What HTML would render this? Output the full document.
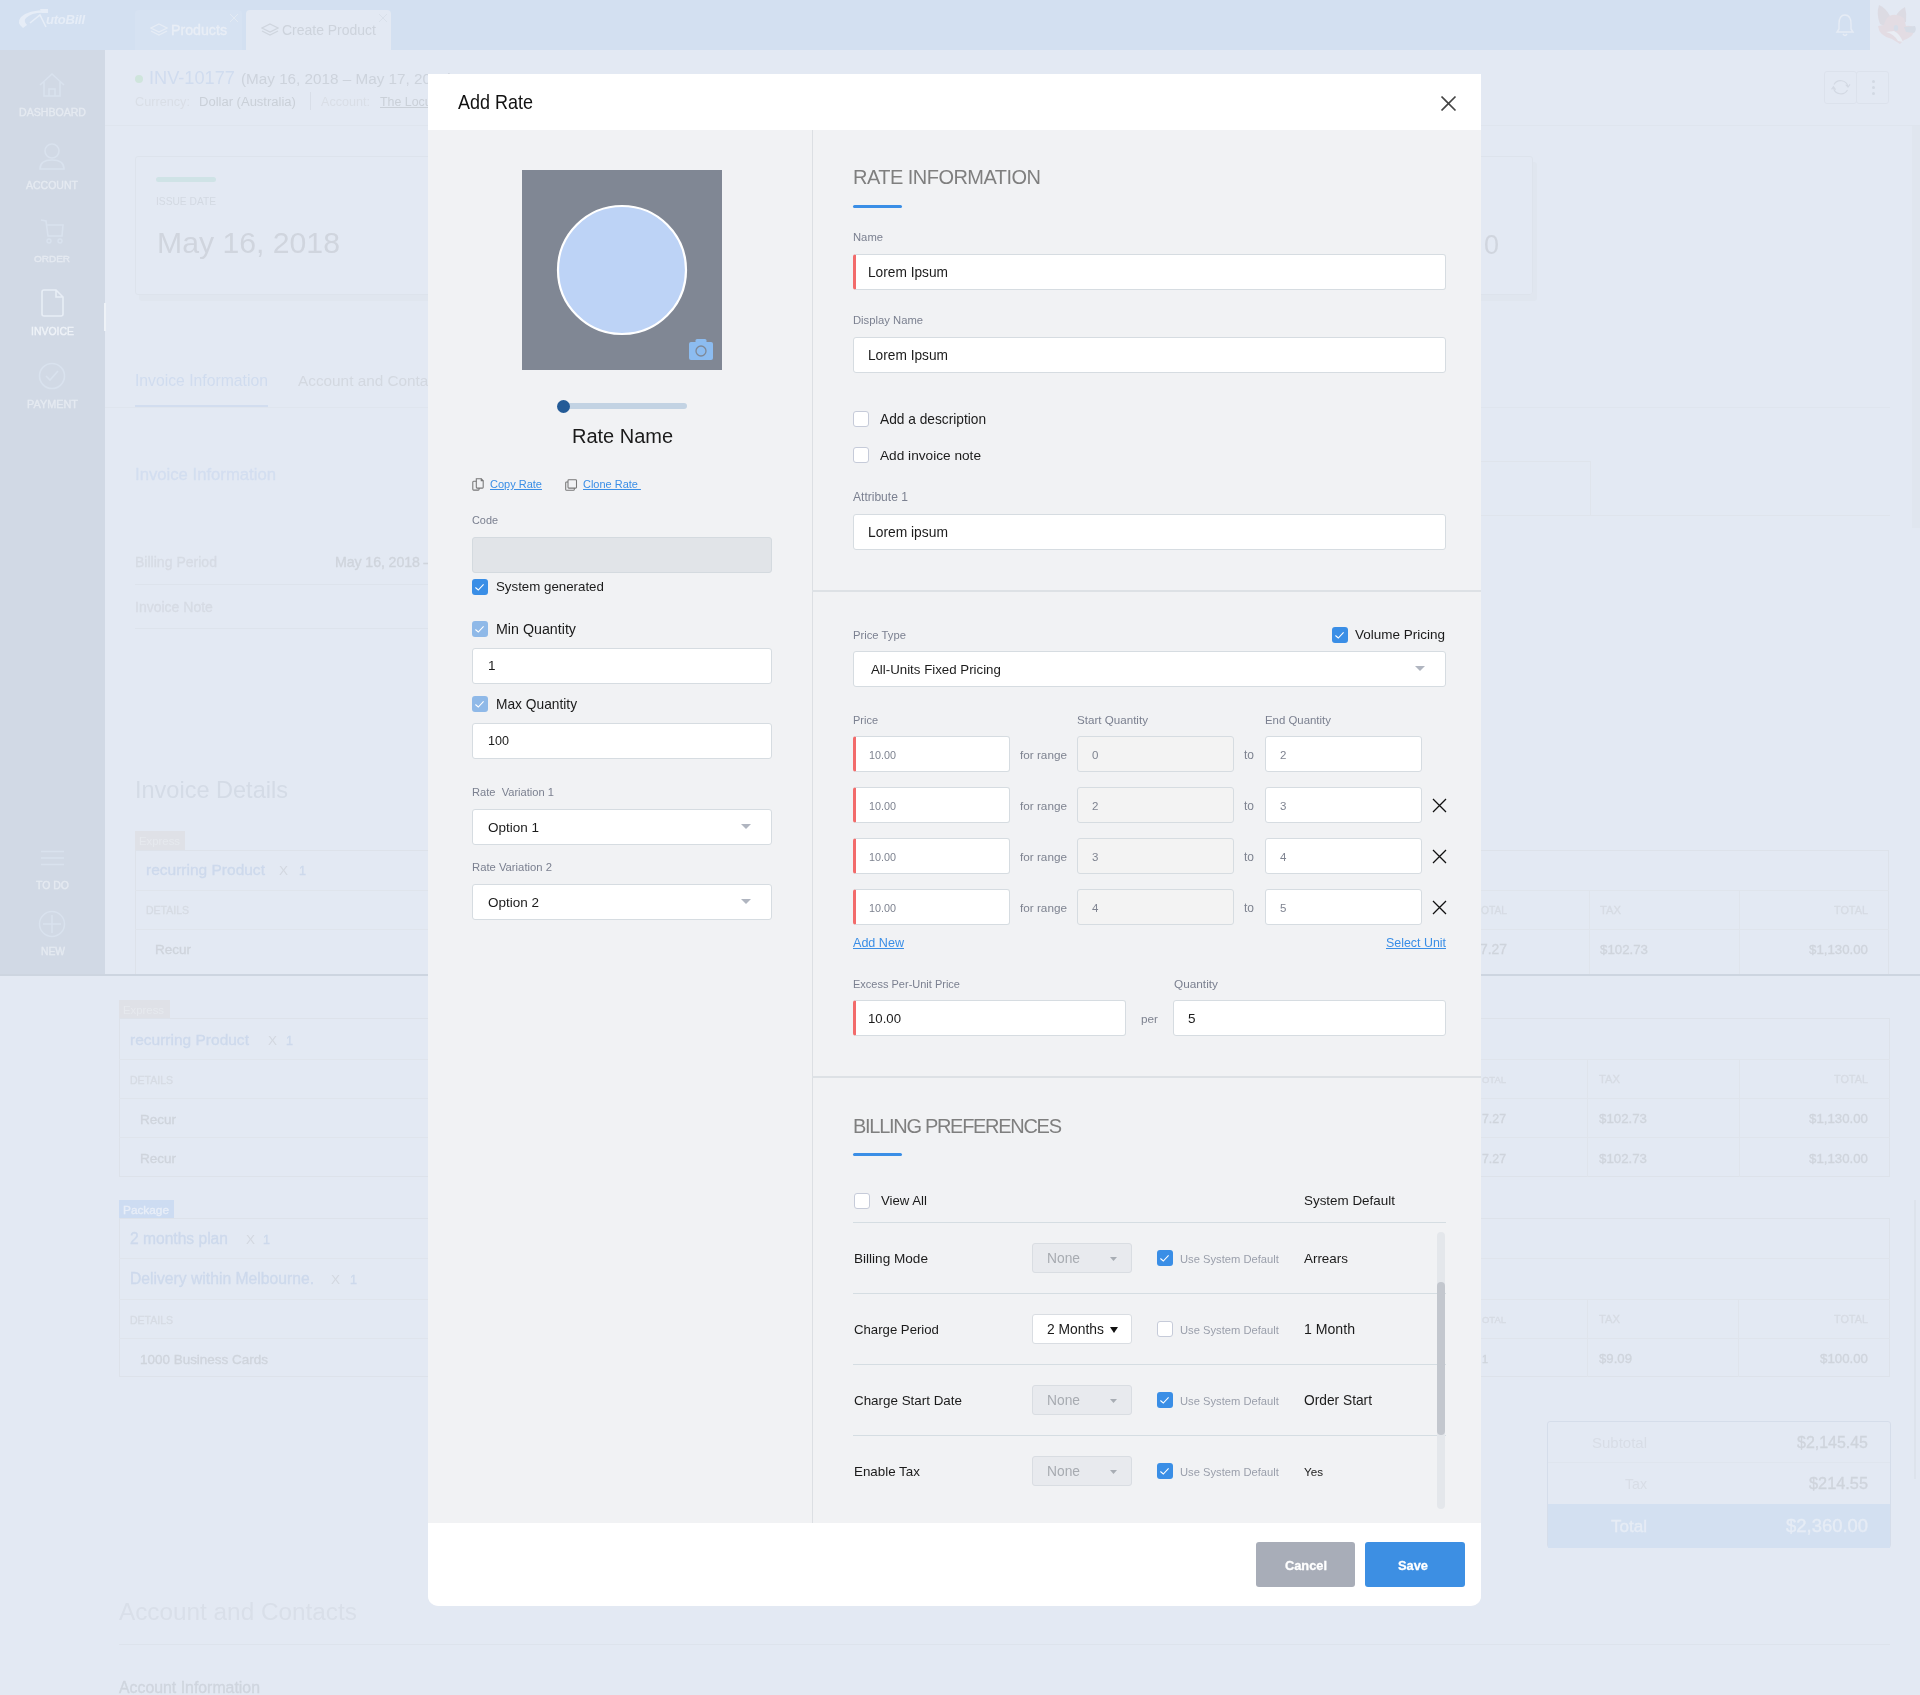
<!DOCTYPE html>
<html><head><meta charset="utf-8">
<style>
*{box-sizing:border-box;margin:0;padding:0}
html,body{width:1920px;height:1695px;overflow:hidden}
body{position:relative;background:#e3e9f3;font-family:"Liberation Sans",sans-serif;color:#111}
.a{position:absolute;white-space:nowrap}
</style></head><body>
<div style="position:absolute;left:0;top:0;width:1920px;height:1695px;will-change:transform">
<div class="a" style="left:0px;top:0px;width:1870px;height:50px;background:#d3e0f1;"></div>
<div class="a" style="left:1870px;top:0px;width:50px;height:50px;background:#e3e9f3;"></div>
<div class="a" style="left:46px;top:13px;font-size:13px;line-height:13px;color:#e6edf7;font-weight:bold;letter-spacing:-0.239px;font-style:italic;">utoBill</div>
<svg class="a" style="left:10px;top:0px;" width="40" height="32" viewBox="0 0 40 32"><path d="M13 28 Q6 23 11 17 Q18 10 37 10 L37 13 Q22 12 16 18 Q13 21 17 25Z" fill="#e6edf7"/><path d="M30 9 L38 9 L38 13 L32 13Z" fill="#e6edf7"/><path d="M20 23 L30 15 L36 27" stroke="#e6edf7" stroke-width="1.6" fill="none" stroke-linejoin="miter"/></svg>
<div class="a" style="left:135px;top:10px;width:107px;height:40px;background:#d6e2f2;border-radius:4px 4px 0 0;"></div>
<div class="a" style="left:246px;top:10px;width:145px;height:40px;background:#e3e9f3;border-radius:4px 4px 0 0;"></div>
<div class="a" style="left:171px;top:23px;font-size:14.19px;line-height:14.19px;color:#e9eef6;letter-spacing:0.001px;-webkit-text-stroke:0.35px #e9eef6;">Products</div>
<div class="a" style="left:282px;top:24px;font-size:13.97px;line-height:13.97px;color:#cdd3dc;">Create Product</div>
<svg class="a" style="left:150px;top:23px;" width="18" height="14" viewBox="0 0 18 14"><path d="M9 1 L17 5 L9 9 L1 5Z M1 8 L9 12 L17 8" stroke="#e6ecf5" stroke-width="1.3" fill="none"/></svg>
<svg class="a" style="left:261px;top:23px;" width="18" height="14" viewBox="0 0 18 14"><path d="M9 1 L17 5 L9 9 L1 5Z M1 8 L9 12 L17 8" stroke="#cfd5de" stroke-width="1.3" fill="none"/></svg>
<svg class="a" style="left:229px;top:13px;" width="10" height="10" viewBox="0 0 10 10"><path d="M1 1L9 9M9 1L1 9" stroke="#e3eaf3" stroke-width="1"/></svg>
<svg class="a" style="left:378px;top:13px;" width="10" height="10" viewBox="0 0 10 10"><path d="M1 1L9 9M9 1L1 9" stroke="#d9e0ea" stroke-width="1"/></svg>
<svg class="a" style="left:1835px;top:13px;" width="20" height="24" viewBox="0 0 20 24"><path d="M10 2 C5 2 4 7 4 11 L4 16 L2 19 L18 19 L16 16 L16 11 C16 7 15 2 10 2Z M8 21 Q10 24 12 21" stroke="#e6ecf5" stroke-width="1.4" fill="none"/></svg>
<svg class="a" style="left:1870px;top:0px;" width="50" height="50" viewBox="0 0 50 50"><path d="M9 5 Q6 14 10 24 L14 26 L20 16 Q16 8 9 5Z" fill="#dcdbe3"/><path d="M35 7 Q28 11 26 16 L31 24 L36 22 Q37 14 35 7Z" fill="#dcdbe3"/><path d="M8 26 Q9 36 22 39 L30 44 L34 40 Q40 38 43 34 L45 28 Q40 25 36 26 L34 18 Q28 14 22 15 Q16 16 14 25Z" fill="#e3dce3"/><path d="M34 27 L45 26 Q47 30 44 33 L36 32Z" fill="#d6dce6"/><path d="M16 32 Q24 34 28 41 L33 42 Q30 34 24 31Z" fill="#e9edf4"/><ellipse cx="26" cy="28" rx="2.2" ry="3" fill="#d5dde9"/></svg>
<div class="a" style="left:0px;top:50px;width:105px;height:925px;background:#d1d9e5;"></div>
<div class="a" style="left:19px;top:107px;font-size:10.58px;line-height:10.58px;color:#e5eaf1;letter-spacing:-0.002px;-webkit-text-stroke:0.35px #e5eaf1;">DASHBOARD</div>
<svg class="a" style="left:38px;top:72px;" width="28" height="26" viewBox="0 0 28 26"><path d="M2 13 L14 2 L26 13 M6 10 L6 24 L22 24 L22 10 M11 24 L11 17 L17 17 L17 24" stroke="#d9e2ee" stroke-width="1.6" fill="none"/></svg>
<div class="a" style="left:26px;top:180px;font-size:10.52px;line-height:10.52px;color:#e5eaf1;letter-spacing:-0.002px;-webkit-text-stroke:0.35px #e5eaf1;">ACCOUNT</div>
<svg class="a" style="left:38px;top:142px;" width="28" height="30" viewBox="0 0 28 30"><circle cx="14" cy="9" r="7" stroke="#d9e2ee" stroke-width="1.6" fill="none"/><path d="M2 27 Q2 18 14 18 Q26 18 26 27Z" stroke="#d9e2ee" stroke-width="1.6" fill="none"/></svg>
<div class="a" style="left:34px;top:254px;font-size:9.97px;line-height:9.97px;color:#e5eaf1;letter-spacing:0.000px;-webkit-text-stroke:0.35px #e5eaf1;">ORDER</div>
<svg class="a" style="left:38px;top:217px;" width="28" height="28" viewBox="0 0 28 28"><path d="M3 3 L8 4 L10 19 L24 19 L25 8 L9 8" stroke="#d9e2ee" stroke-width="1.6" fill="none"/><circle cx="11" cy="24" r="2" stroke="#d9e2ee" stroke-width="1.4" fill="none"/><circle cx="22" cy="24" r="2" stroke="#d9e2ee" stroke-width="1.4" fill="none"/></svg>
<div class="a" style="left:31px;top:327px;font-size:10.46px;line-height:10.46px;color:#eff3f8;letter-spacing:-0.001px;-webkit-text-stroke:0.35px #eff3f8;">INVOICE</div>
<svg class="a" style="left:40px;top:289px;" width="26" height="29" viewBox="0 0 26 29"><path d="M2 3 Q2 1 4 1 L16 1 L23 8 L23 25 Q23 27 21 27 L4 27 Q2 27 2 25Z M16 1 L16 8 L23 8" stroke="#e8eef6" stroke-width="1.6" fill="none"/></svg>
<div class="a" style="left:27px;top:399px;font-size:10.88px;line-height:10.88px;color:#e5eaf1;letter-spacing:0.004px;-webkit-text-stroke:0.35px #e5eaf1;">PAYMENT</div>
<svg class="a" style="left:38px;top:362px;" width="28" height="28" viewBox="0 0 28 28"><circle cx="14" cy="14" r="12.5" stroke="#d9e2ee" stroke-width="1.6" fill="none"/><path d="M8 14 L12 18 L20 9" stroke="#d9e2ee" stroke-width="1.6" fill="none"/></svg>
<div class="a" style="left:36px;top:881px;font-size:10.48px;line-height:10.48px;color:#e5eaf1;letter-spacing:0.001px;-webkit-text-stroke:0.35px #e5eaf1;">TO DO</div>
<svg class="a" style="left:40px;top:849px;" width="25" height="20" viewBox="0 0 25 20"><path d="M1 2.5 H24 M1 9 H24 M1 15.5 H24" stroke="#d9e2ee" stroke-width="1.6"/></svg>
<div class="a" style="left:41px;top:947px;font-size:10.29px;line-height:10.29px;color:#e5eaf1;letter-spacing:-0.002px;-webkit-text-stroke:0.35px #e5eaf1;">NEW</div>
<svg class="a" style="left:38px;top:910px;" width="28" height="28" viewBox="0 0 28 28"><circle cx="14" cy="14" r="12.5" stroke="#d9e2ee" stroke-width="1.5" fill="none"/><path d="M14 5 V23 M5 14 H23" stroke="#d9e2ee" stroke-width="1.5"/></svg>
<div class="a" style="left:104px;top:303px;width:2px;height:28px;background:#eef2f7;"></div>
<div class="a" style="left:135px;top:75px;width:8px;height:8px;background:#cfe5dc;border-radius:4px;"></div>
<div class="a" style="left:149px;top:69px;font-size:18.2px;line-height:18.2px;color:#d0dcef;">INV-10177</div>
<div class="a" style="left:241px;top:71px;font-size:15.25px;line-height:15.25px;color:#cdd3dc;">(May 16, 2018 – May 17, 2018)</div>
<div class="a" style="left:135px;top:96px;font-size:12.69px;line-height:12.69px;color:#d9dee6;">Currency:</div>
<div class="a" style="left:199px;top:95px;font-size:13.03px;line-height:13.03px;color:#cad0d8;">Dollar (Australia)</div>
<div class="a" style="left:310px;top:92px;width:1px;height:18px;background:#d8dee8;"></div>
<div class="a" style="left:321px;top:96px;font-size:12.59px;line-height:12.59px;color:#d9dee6;">Account:</div>
<div class="a" style="left:380px;top:96px;font-size:12.4px;line-height:12.4px;color:#cad0d8;text-decoration:underline;">The Locust Walk</div>
<div class="a" style="left:105px;top:125px;width:1815px;height:1px;background:#dfe5ee;"></div>
<div class="a" style="left:1824px;top:71px;width:33px;height:33px;background:none;border:1px solid #dce2ec;border-radius:3px;"></div>
<div class="a" style="left:1856px;top:71px;width:33px;height:33px;background:none;border:1px solid #dce2ec;border-radius:3px;"></div>
<svg class="a" style="left:1830px;top:77px;" width="22" height="20" viewBox="0 0 22 20"><path d="M4 7.5 A7.6 7.6 0 0 1 18 9.5 M17.5 13 A7.6 7.6 0 0 1 3.5 11" stroke="#d3d9e3" stroke-width="1.1" fill="none"/><path d="M15.8 7.6 L18 10.2 L20 7.4 M1.6 12.4 L3.4 9.8 L5.6 12.6" stroke="#d3d9e3" stroke-width="1.1" fill="none"/></svg>
<div class="a" style="left:1872px;top:80px;width:3px;height:3px;background:#d2d9e3;border-radius:2px;"></div>
<div class="a" style="left:1872px;top:86px;width:3px;height:3px;background:#d2d9e3;border-radius:2px;"></div>
<div class="a" style="left:1872px;top:92px;width:3px;height:3px;background:#d2d9e3;border-radius:2px;"></div>
<div class="a" style="left:135px;top:156px;width:1398px;height:139px;background:none;border:1px solid #dde3ec;border-radius:3px;box-shadow:4px 6px 0 #e0e6ef;"></div>
<div class="a" style="left:156px;top:177px;width:60px;height:5px;background:#cfe3e6;border-radius:3px;"></div>
<div class="a" style="left:156px;top:197px;font-size:10.22px;line-height:10.22px;color:#d3d9e2;">ISSUE DATE</div>
<div class="a" style="left:157px;top:228px;font-size:30.19px;line-height:30.19px;color:#d0d5de;">May 16, 2018</div>
<div class="a" style="left:1484px;top:232px;font-size:26.97px;line-height:26.97px;color:#d0d5de;">0</div>
<div class="a" style="left:135px;top:373px;font-size:15.74px;line-height:15.74px;color:#d0dcef;">Invoice Information</div>
<div class="a" style="left:298px;top:373px;font-size:15.33px;line-height:15.33px;color:#d3d8e0;">Account and Contacts</div>
<div class="a" style="left:135px;top:405px;width:133px;height:3px;background:#d2ddef;"></div>
<div class="a" style="left:105px;top:407px;width:1785px;height:1px;background:#dfe5ee;"></div>
<div class="a" style="left:135px;top:467px;font-size:16.69px;line-height:16.69px;color:#d3def0;letter-spacing:-0.000px;-webkit-text-stroke:0.35px #d3def0;">Invoice Information</div>
<div class="a" style="left:135px;top:555px;font-size:14.05px;line-height:14.05px;color:#d6dbe4;letter-spacing:-0.000px;-webkit-text-stroke:0.35px #d6dbe4;">Billing Period</div>
<div class="a" style="left:335px;top:555px;font-size:14.2px;line-height:14.2px;color:#cfd4dc;letter-spacing:-0.100px;-webkit-text-stroke:0.35px #cfd4dc;">May 16, 2018 – May 17, 2018</div>
<div class="a" style="left:135px;top:584px;width:700px;height:1px;background:#dde3ec;"></div>
<div class="a" style="left:135px;top:600px;font-size:14.03px;line-height:14.03px;color:#d6dbe4;letter-spacing:0.001px;-webkit-text-stroke:0.35px #d6dbe4;">Invoice Note</div>
<div class="a" style="left:135px;top:628px;width:700px;height:1px;background:#dde3ec;"></div>
<div class="a" style="left:1400px;top:461px;width:190px;height:1px;background:#dfe4ec;"></div>
<div class="a" style="left:1590px;top:461px;width:1px;height:54px;background:#dfe4ec;"></div>
<div class="a" style="left:1400px;top:515px;width:490px;height:1px;background:#dfe4ec;"></div>
<div class="a" style="left:1912px;top:126px;width:8px;height:402px;background:#e0e6ef;"></div>
<div class="a" style="left:135px;top:779px;font-size:23.53px;line-height:23.53px;color:#d4dbe6;">Invoice Details</div>
<div class="a" style="left:135px;top:831px;width:50px;height:20px;background:#dfe1e7;"></div>
<div class="a" style="left:139px;top:836px;font-size:11.35px;line-height:11.35px;color:#e6e9ee;">Express</div>
<div class="a" style="left:135px;top:850px;width:1754px;height:125px;background:none;border:1px solid #dde2ea;"></div>
<div class="a" style="left:146px;top:862px;font-size:15.51px;line-height:15.51px;color:#cdd9ec;letter-spacing:0.003px;-webkit-text-stroke:0.35px #cdd9ec;">recurring Product</div>
<div class="a" style="left:279px;top:864px;font-size:13.49px;line-height:13.49px;color:#d3d8e0;">X</div>
<div class="a" style="left:299px;top:865px;font-size:12.58px;line-height:12.58px;color:#cdd9ec;letter-spacing:0.003px;-webkit-text-stroke:0.35px #cdd9ec;">1</div>
<div class="a" style="left:135px;top:890px;width:1754px;height:1px;background:#dfe4ec;"></div>
<div class="a" style="left:146px;top:905px;font-size:10.5px;line-height:10.5px;color:#d6dbe3;letter-spacing:0.003px;-webkit-text-stroke:0.35px #d6dbe3;">DETAILS</div>
<div class="a" style="left:135px;top:929px;width:1754px;height:1px;background:#dfe4ec;"></div>
<div class="a" style="left:155px;top:943px;font-size:13.5px;line-height:13.5px;color:#cfd4dc;letter-spacing:-0.003px;-webkit-text-stroke:0.35px #cfd4dc;">Recur</div>
<div class="a" style="left:1589px;top:890px;width:1px;height:85px;background:#dfe4ec;"></div>
<div class="a" style="left:1739px;top:890px;width:1px;height:85px;background:#dfe4ec;"></div>
<div class="a" style="left:1481px;top:906px;font-size:10.24px;line-height:10.24px;color:#d6dbe3;letter-spacing:0.006px;-webkit-text-stroke:0.35px #d6dbe3;">OTAL</div>
<div class="a" style="left:1600px;top:905px;font-size:11.22px;line-height:11.22px;color:#d6dbe3;letter-spacing:0.007px;-webkit-text-stroke:0.35px #d6dbe3;">TAX</div>
<div class="a" style="right:52px;top:905px;font-size:10.86px;line-height:10.86px;color:#d6dbe3;letter-spacing:0.002px;-webkit-text-stroke:0.35px #d6dbe3;">TOTAL</div>
<div class="a" style="left:1480px;top:943px;font-size:13.87px;line-height:13.87px;color:#cfd4dc;letter-spacing:0.003px;-webkit-text-stroke:0.35px #cfd4dc;">7.27</div>
<div class="a" style="left:1600px;top:943px;font-size:13.28px;line-height:13.28px;color:#cfd4dc;letter-spacing:-0.001px;-webkit-text-stroke:0.35px #cfd4dc;">$102.73</div>
<div class="a" style="right:52px;top:943px;font-size:13.26px;line-height:13.26px;color:#cfd4dc;letter-spacing:0.001px;-webkit-text-stroke:0.35px #cfd4dc;">$1,130.00</div>
<div class="a" style="left:0px;top:974px;width:1920px;height:2px;background:#cdd5e0;"></div>
<div class="a" style="left:119px;top:1000px;width:51px;height:19px;background:#dfe1e7;"></div>
<div class="a" style="left:123px;top:1005px;font-size:11.35px;line-height:11.35px;color:#e6e9ee;">Express</div>
<div class="a" style="left:119px;top:1018px;width:1771px;height:159px;background:none;border:1px solid #dde2ea;"></div>
<div class="a" style="left:130px;top:1032px;font-size:15.51px;line-height:15.51px;color:#cdd9ec;letter-spacing:0.003px;-webkit-text-stroke:0.35px #cdd9ec;">recurring Product</div>
<div class="a" style="left:268px;top:1034px;font-size:13.49px;line-height:13.49px;color:#d3d8e0;">X</div>
<div class="a" style="left:286px;top:1035px;font-size:12.58px;line-height:12.58px;color:#cdd9ec;letter-spacing:0.003px;-webkit-text-stroke:0.35px #cdd9ec;">1</div>
<div class="a" style="left:119px;top:1059px;width:1771px;height:1px;background:#dfe4ec;"></div>
<div class="a" style="left:130px;top:1075px;font-size:10.5px;line-height:10.5px;color:#d6dbe3;letter-spacing:0.003px;-webkit-text-stroke:0.35px #d6dbe3;">DETAILS</div>
<div class="a" style="left:119px;top:1098px;width:1771px;height:1px;background:#dfe4ec;"></div>
<div class="a" style="left:140px;top:1113px;font-size:13.5px;line-height:13.5px;color:#cfd4dc;letter-spacing:-0.003px;-webkit-text-stroke:0.35px #cfd4dc;">Recur</div>
<div class="a" style="left:119px;top:1137px;width:1771px;height:1px;background:#dfe4ec;"></div>
<div class="a" style="left:140px;top:1152px;font-size:13.5px;line-height:13.5px;color:#cfd4dc;letter-spacing:-0.003px;-webkit-text-stroke:0.35px #cfd4dc;">Recur</div>
<div class="a" style="left:1587px;top:1059px;width:1px;height:118px;background:#dfe4ec;"></div>
<div class="a" style="left:1739px;top:1059px;width:1px;height:118px;background:#dfe4ec;"></div>
<div class="a" style="left:1482px;top:1075px;font-size:9.45px;line-height:9.45px;color:#d6dbe3;letter-spacing:0.007px;-webkit-text-stroke:0.35px #d6dbe3;">OTAL</div>
<div class="a" style="left:1599px;top:1074px;font-size:11.22px;line-height:11.22px;color:#d6dbe3;letter-spacing:0.007px;-webkit-text-stroke:0.35px #d6dbe3;">TAX</div>
<div class="a" style="right:52px;top:1074px;font-size:10.86px;line-height:10.86px;color:#d6dbe3;letter-spacing:0.002px;-webkit-text-stroke:0.35px #d6dbe3;">TOTAL</div>
<div class="a" style="left:1482px;top:1113px;font-size:12.33px;line-height:12.33px;color:#cfd4dc;letter-spacing:0.001px;-webkit-text-stroke:0.35px #cfd4dc;">7.27</div>
<div class="a" style="left:1599px;top:1112px;font-size:13.28px;line-height:13.28px;color:#cfd4dc;letter-spacing:-0.001px;-webkit-text-stroke:0.35px #cfd4dc;">$102.73</div>
<div class="a" style="right:52px;top:1112px;font-size:13.26px;line-height:13.26px;color:#cfd4dc;letter-spacing:0.001px;-webkit-text-stroke:0.35px #cfd4dc;">$1,130.00</div>
<div class="a" style="left:1482px;top:1153px;font-size:12.33px;line-height:12.33px;color:#cfd4dc;letter-spacing:0.001px;-webkit-text-stroke:0.35px #cfd4dc;">7.27</div>
<div class="a" style="left:1599px;top:1152px;font-size:13.28px;line-height:13.28px;color:#cfd4dc;letter-spacing:-0.001px;-webkit-text-stroke:0.35px #cfd4dc;">$102.73</div>
<div class="a" style="right:52px;top:1152px;font-size:13.26px;line-height:13.26px;color:#cfd4dc;letter-spacing:0.001px;-webkit-text-stroke:0.35px #cfd4dc;">$1,130.00</div>
<div class="a" style="left:119px;top:1200px;width:55px;height:19px;background:#cddcf2;"></div>
<div class="a" style="left:123px;top:1205px;font-size:11.82px;line-height:11.82px;color:#e8eef8;letter-spacing:0.001px;-webkit-text-stroke:0.35px #e8eef8;">Package</div>
<div class="a" style="left:119px;top:1218px;width:1771px;height:159px;background:none;border:1px solid #dde2ea;"></div>
<div class="a" style="left:130px;top:1231px;font-size:15.6px;line-height:15.6px;color:#cdd9ec;-webkit-text-stroke:0.35px #cdd9ec;">2 months plan</div>
<div class="a" style="left:246px;top:1233px;font-size:13.49px;line-height:13.49px;color:#d3d8e0;">X</div>
<div class="a" style="left:263px;top:1234px;font-size:12.58px;line-height:12.58px;color:#cdd9ec;letter-spacing:0.003px;-webkit-text-stroke:0.35px #cdd9ec;">1</div>
<div class="a" style="left:119px;top:1258px;width:1771px;height:1px;background:#dfe4ec;"></div>
<div class="a" style="left:130px;top:1271px;font-size:15.69px;line-height:15.69px;color:#cdd9ec;letter-spacing:0.001px;-webkit-text-stroke:0.35px #cdd9ec;">Delivery within Melbourne.</div>
<div class="a" style="left:331px;top:1273px;font-size:13.49px;line-height:13.49px;color:#d3d8e0;">X</div>
<div class="a" style="left:350px;top:1274px;font-size:12.58px;line-height:12.58px;color:#cdd9ec;letter-spacing:0.003px;-webkit-text-stroke:0.35px #cdd9ec;">1</div>
<div class="a" style="left:119px;top:1299px;width:1771px;height:1px;background:#dfe4ec;"></div>
<div class="a" style="left:130px;top:1315px;font-size:10.5px;line-height:10.5px;color:#d6dbe3;letter-spacing:0.003px;-webkit-text-stroke:0.35px #d6dbe3;">DETAILS</div>
<div class="a" style="left:119px;top:1338px;width:1771px;height:1px;background:#dfe4ec;"></div>
<div class="a" style="left:140px;top:1353px;font-size:13.46px;line-height:13.46px;color:#cfd4dc;letter-spacing:0.003px;-webkit-text-stroke:0.35px #cfd4dc;">1000 Business Cards</div>
<div class="a" style="left:1587px;top:1299px;width:1px;height:78px;background:#dfe4ec;"></div>
<div class="a" style="left:1738px;top:1299px;width:1px;height:78px;background:#dfe4ec;"></div>
<div class="a" style="left:1482px;top:1315px;font-size:9.45px;line-height:9.45px;color:#d6dbe3;letter-spacing:0.007px;-webkit-text-stroke:0.35px #d6dbe3;">OTAL</div>
<div class="a" style="left:1599px;top:1314px;font-size:11.22px;line-height:11.22px;color:#d6dbe3;letter-spacing:0.007px;-webkit-text-stroke:0.35px #d6dbe3;">TAX</div>
<div class="a" style="right:52px;top:1314px;font-size:10.86px;line-height:10.86px;color:#d6dbe3;letter-spacing:0.002px;-webkit-text-stroke:0.35px #d6dbe3;">TOTAL</div>
<div class="a" style="left:1482px;top:1354px;font-size:10.79px;line-height:10.79px;color:#cfd4dc;-webkit-text-stroke:0.35px #cfd4dc;">1</div>
<div class="a" style="left:1599px;top:1352px;font-size:13.18px;line-height:13.18px;color:#cfd4dc;letter-spacing:0.005px;-webkit-text-stroke:0.35px #cfd4dc;">$9.09</div>
<div class="a" style="right:52px;top:1352px;font-size:13.28px;line-height:13.28px;color:#cfd4dc;letter-spacing:-0.001px;-webkit-text-stroke:0.35px #cfd4dc;">$100.00</div>
<div class="a" style="left:1547px;top:1421px;width:344px;height:127px;background:none;border:1px solid #d5ddea;border-radius:3px;"></div>
<div class="a" style="left:1548px;top:1504px;width:342px;height:44px;background:#d3e0f1;"></div>
<div class="a" style="left:1548px;top:1462px;width:342px;height:1px;background:#dfe5ee;"></div>
<div class="a" style="right:273px;top:1435px;font-size:14.99px;line-height:14.99px;color:#d8dde6;">Subtotal</div>
<div class="a" style="right:52px;top:1435px;font-size:15.96px;line-height:15.96px;color:#cfd4dc;letter-spacing:-0.001px;-webkit-text-stroke:0.35px #cfd4dc;">$2,145.45</div>
<div class="a" style="right:273px;top:1477px;font-size:14.14px;line-height:14.14px;color:#d8dde6;">Tax</div>
<div class="a" style="right:52px;top:1475px;font-size:16.32px;line-height:16.32px;color:#cfd4dc;letter-spacing:0.003px;-webkit-text-stroke:0.35px #cfd4dc;">$214.55</div>
<div class="a" style="right:273px;top:1518px;font-size:17.04px;line-height:17.04px;color:#e6ecf5;letter-spacing:0.002px;-webkit-text-stroke:0.35px #e6ecf5;">Total</div>
<div class="a" style="right:52px;top:1517px;font-size:18.43px;line-height:18.43px;color:#e6ecf5;letter-spacing:0.001px;-webkit-text-stroke:0.35px #e6ecf5;">$2,360.00</div>
<div class="a" style="left:1914px;top:1200px;width:2px;height:279px;background:#dde3ec;"></div>
<div class="a" style="left:119px;top:1600px;font-size:24.32px;line-height:24.32px;color:#d9dfe9;">Account and Contacts</div>
<div class="a" style="left:119px;top:1644px;width:1771px;height:1px;background:#dde3ec;"></div>
<div class="a" style="left:119px;top:1680px;font-size:15.85px;line-height:15.85px;color:#cfd5de;letter-spacing:0.002px;-webkit-text-stroke:0.35px #cfd5de;">Account Information</div>
<div class="a" style="left:428px;top:74px;width:1053px;height:1532px;background:#f1f2f4;border-radius:0 0 10px 10px;"></div>
<div class="a" style="left:428px;top:74px;width:1053px;height:56px;background:#ffffff;"></div>
<div class="a" style="left:428px;top:1523px;width:1053px;height:83px;background:#ffffff;border-radius:0 0 10px 10px;"></div>
<div class="a" style="left:812px;top:130px;width:1px;height:1393px;background:#dcdfe3;"></div>
<div class="a" style="left:458px;top:91px;font-size:21px;line-height:21px;color:#111;transform:scaleX(0.8566);transform-origin:0 0;">Add Rate</div>
<svg class="a" style="left:1440px;top:95px;" width="17" height="17" viewBox="0 0 17 17"><path d="M1.5 1.5L15.5 15.5M15.5 1.5L1.5 15.5" stroke="#444" stroke-width="1.7"/></svg>
<div class="a" style="left:522px;top:170px;width:200px;height:200px;background:#808794;"></div>
<svg class="a" style="left:555px;top:203px;" width="134" height="134" viewBox="0 0 134 134"><circle cx="67" cy="67" r="64" fill="#bdd3f6" stroke="#fff" stroke-width="2.2"/></svg>
<svg class="a" style="left:688px;top:338px;" width="26" height="23" viewBox="0 0 26 23"><rect x="1" y="4" width="24" height="18" rx="2" fill="#8cbcf0"/><rect x="7.5" y="1" width="11" height="5" rx="1.5" fill="#8cbcf0"/><circle cx="13" cy="13" r="5" fill="none" stroke="#7f8896" stroke-width="1.3"/></svg>
<div class="a" style="left:562px;top:403px;width:125px;height:6px;background:#c3d3e3;border-radius:3px;"></div>
<div class="a" style="left:557px;top:400px;width:13px;height:13px;background:#245b97;border-radius:7px;"></div>
<div class="a" style="left:572px;top:426px;font-size:20px;line-height:20px;color:#1b1b1b;letter-spacing:-0.019px;">Rate Name</div>
<svg class="a" style="left:471px;top:477px;" width="15" height="15" viewBox="0 0 15 15"><path d="M5.3 1.8 H10.3 L12.2 3.7 V10.3 Q12.2 11.1 11.4 11.1 H6.1 Q5.3 11.1 5.3 10.3Z" stroke="#777" stroke-width="1.05" fill="none"/><path d="M10.3 1.8 V3.7 H12.2" stroke="#777" stroke-width="1.2" fill="none"/><path d="M5.3 4.3 H2.6 Q1.8 4.3 1.8 5.1 V12.3 Q1.8 13.1 2.6 13.1 H7.3 Q8.1 13.1 8.1 12.3 V11.1" stroke="#777" stroke-width="1.05" fill="none"/></svg>
<div class="a" style="left:490px;top:479px;font-size:11.01px;line-height:11.01px;color:#3a8ee6;text-decoration:underline;">Copy Rate</div>
<svg class="a" style="left:564px;top:477px;" width="15" height="15" viewBox="0 0 15 15"><rect x="4" y="2.7" width="8.5" height="8.4" rx="0.9" stroke="#777" stroke-width="1.05" fill="none"/><path d="M4 4.9 H2.6 Q1.7 4.9 1.7 5.8 V12.4 Q1.7 13.25 2.6 13.25 H9.4 Q10.3 13.25 10.3 12.4 V11.1" stroke="#777" stroke-width="1.05" fill="none"/></svg>
<div class="a" style="left:583px;top:479px;font-size:10.98px;line-height:10.98px;color:#3a8ee6;text-decoration:underline;">Clone Rate&nbsp;</div>
<div class="a" style="left:472px;top:515px;font-size:10.88px;line-height:10.88px;color:#7b8090;">Code</div>
<div class="a" style="left:472px;top:537px;width:300px;height:36px;background:#e1e4e8;border:1px solid #d4dadf;border-radius:3px;"></div>
<div class="a" style="left:472px;top:579px;width:16px;height:16px;background:#3a8ee6;border-radius:3px;"></div>
<svg class="a" style="left:472px;top:579px;" width="16" height="16" viewBox="0 0 16 16"><path d="M3.4 8.5 L6.3 11 L11.6 5.3" stroke="#fff" stroke-width="1.1" fill="none"/></svg>
<div class="a" style="left:496px;top:580px;font-size:13.31px;line-height:13.31px;color:#1b1b1b;">System generated</div>
<div class="a" style="left:472px;top:621px;width:16px;height:16px;background:#8fb9e8;border-radius:3px;"></div>
<svg class="a" style="left:472px;top:621px;" width="16" height="16" viewBox="0 0 16 16"><path d="M3.4 8.5 L6.3 11 L11.6 5.3" stroke="#fff" stroke-width="1.1" fill="none"/></svg>
<div class="a" style="left:496px;top:622px;font-size:14.25px;line-height:14.25px;color:#1b1b1b;">Min Quantity</div>
<div class="a" style="left:472px;top:648px;width:300px;height:36px;background:#fff;border:1px solid #d6dce1;border-radius:3px;"></div>
<div class="a" style="left:488px;top:659px;font-size:13.5px;line-height:13.5px;color:#1b1b1b;">1</div>
<div class="a" style="left:472px;top:696px;width:16px;height:16px;background:#8fb9e8;border-radius:3px;"></div>
<svg class="a" style="left:472px;top:696px;" width="16" height="16" viewBox="0 0 16 16"><path d="M3.4 8.5 L6.3 11 L11.6 5.3" stroke="#fff" stroke-width="1.1" fill="none"/></svg>
<div class="a" style="left:496px;top:698px;font-size:13.75px;line-height:13.75px;color:#1b1b1b;">Max Quantity</div>
<div class="a" style="left:472px;top:723px;width:300px;height:36px;background:#fff;border:1px solid #d6dce1;border-radius:3px;"></div>
<div class="a" style="left:488px;top:735px;font-size:12.58px;line-height:12.58px;color:#1b1b1b;">100</div>
<div class="a" style="left:472px;top:787px;font-size:11.12px;line-height:11.12px;color:#7b8090;">Rate&nbsp; Variation 1</div>
<div class="a" style="left:472px;top:809px;width:300px;height:36px;background:#fff;border:1px solid #d6dce1;border-radius:3px;"></div>
<div class="a" style="left:488px;top:821px;font-size:13.49px;line-height:13.49px;color:#1b1b1b;">Option 1</div>
<svg class="a" style="left:741px;top:824px;" width="10" height="5" viewBox="0 0 10 5"><path d="M0 0 L10 0 L5.0 5Z" fill="#b0b5c0"/></svg>
<div class="a" style="left:472px;top:862px;font-size:11.27px;line-height:11.27px;color:#7b8090;">Rate Variation 2</div>
<div class="a" style="left:472px;top:884px;width:300px;height:36px;background:#fff;border:1px solid #d6dce1;border-radius:3px;"></div>
<div class="a" style="left:488px;top:896px;font-size:13.49px;line-height:13.49px;color:#1b1b1b;">Option 2</div>
<svg class="a" style="left:741px;top:899px;" width="10" height="5" viewBox="0 0 10 5"><path d="M0 0 L10 0 L5.0 5Z" fill="#b0b5c0"/></svg>
<div class="a" style="left:853px;top:167px;font-size:20px;line-height:20px;color:#7f7f7f;letter-spacing:-0.528px;">RATE INFORMATION</div>
<div class="a" style="left:853px;top:205px;width:49px;height:3px;background:#3a8ee6;border-radius:2px;"></div>
<div class="a" style="left:853px;top:232px;font-size:11.25px;line-height:11.25px;color:#7b8090;">Name</div>
<div class="a" style="left:853px;top:254px;width:593px;height:36px;background:#fff;border:1px solid #d6dce1;border-radius:3px;border-left:3px solid #f26b6b;"></div>
<div class="a" style="left:868px;top:266px;font-size:13.71px;line-height:13.71px;color:#1b1b1b;">Lorem Ipsum</div>
<div class="a" style="left:853px;top:315px;font-size:11.25px;line-height:11.25px;color:#7b8090;">Display Name</div>
<div class="a" style="left:853px;top:337px;width:593px;height:36px;background:#fff;border:1px solid #d6dce1;border-radius:3px;"></div>
<div class="a" style="left:868px;top:349px;font-size:13.71px;line-height:13.71px;color:#1b1b1b;">Lorem Ipsum</div>
<div class="a" style="left:853px;top:411px;width:16px;height:16px;background:#fff;border:1px solid #c6cbd9;border-radius:3px;"></div>
<div class="a" style="left:880px;top:413px;font-size:13.72px;line-height:13.72px;color:#1b1b1b;">Add a description</div>
<div class="a" style="left:853px;top:447px;width:16px;height:16px;background:#fff;border:1px solid #c6cbd9;border-radius:3px;"></div>
<div class="a" style="left:880px;top:449px;font-size:13.66px;line-height:13.66px;color:#1b1b1b;">Add invoice note</div>
<div class="a" style="left:853px;top:491px;font-size:12.06px;line-height:12.06px;color:#7b8090;">Attribute 1</div>
<div class="a" style="left:853px;top:514px;width:593px;height:36px;background:#fff;border:1px solid #d6dce1;border-radius:3px;"></div>
<div class="a" style="left:868px;top:526px;font-size:13.84px;line-height:13.84px;color:#1b1b1b;">Lorem ipsum</div>
<div class="a" style="left:812px;top:590px;width:669px;height:2px;background:#dde1e5;"></div>
<div class="a" style="left:853px;top:630px;font-size:11.26px;line-height:11.26px;color:#7b8090;">Price Type</div>
<div class="a" style="left:1332px;top:627px;width:16px;height:16px;background:#3a8ee6;border-radius:3px;"></div>
<svg class="a" style="left:1332px;top:627px;" width="16" height="16" viewBox="0 0 16 16"><path d="M3.4 8.5 L6.3 11 L11.6 5.3" stroke="#fff" stroke-width="1.1" fill="none"/></svg>
<div class="a" style="left:1355px;top:628px;font-size:13.49px;line-height:13.49px;color:#1b1b1b;">Volume Pricing</div>
<div class="a" style="left:853px;top:651px;width:593px;height:36px;background:#fff;border:1px solid #d6dce1;border-radius:3px;"></div>
<div class="a" style="left:871px;top:663px;font-size:13.29px;line-height:13.29px;color:#1b1b1b;">All-Units Fixed Pricing</div>
<svg class="a" style="left:1415px;top:666px;" width="10" height="5" viewBox="0 0 10 5"><path d="M0 0 L10 0 L5.0 5Z" fill="#b0b5c0"/></svg>
<div class="a" style="left:853px;top:715px;font-size:10.97px;line-height:10.97px;color:#7b8090;">Price</div>
<div class="a" style="left:1077px;top:714px;font-size:11.61px;line-height:11.61px;color:#7b8090;">Start Quantity</div>
<div class="a" style="left:1265px;top:715px;font-size:11.41px;line-height:11.41px;color:#7b8090;">End Quantity</div>
<div class="a" style="left:853px;top:736px;width:157px;height:36px;background:#fff;border:1px solid #d6dce1;border-radius:3px;border-left:3px solid #f26b6b;"></div>
<div class="a" style="left:869px;top:750px;font-size:10.79px;line-height:10.79px;color:#7e8390;">10.00</div>
<div class="a" style="left:1020px;top:749px;font-size:11.74px;line-height:11.74px;color:#7e8390;">for range</div>
<div class="a" style="left:1077px;top:736px;width:157px;height:36px;background:#f3f3f3;border:1px solid #d6dce1;border-radius:3px;"></div>
<div class="a" style="left:1092px;top:750px;font-size:11.5px;line-height:11.5px;color:#7e8390;">0</div>
<div class="a" style="left:1244px;top:749px;font-size:11.99px;line-height:11.99px;color:#7e8390;">to</div>
<div class="a" style="left:1265px;top:736px;width:157px;height:36px;background:#fff;border:1px solid #d6dce1;border-radius:3px;"></div>
<div class="a" style="left:1280px;top:750px;font-size:11.5px;line-height:11.5px;color:#7e8390;">2</div>
<div class="a" style="left:853px;top:787px;width:157px;height:36px;background:#fff;border:1px solid #d6dce1;border-radius:3px;border-left:3px solid #f26b6b;"></div>
<div class="a" style="left:869px;top:801px;font-size:10.79px;line-height:10.79px;color:#7e8390;">10.00</div>
<div class="a" style="left:1020px;top:800px;font-size:11.74px;line-height:11.74px;color:#7e8390;">for range</div>
<div class="a" style="left:1077px;top:787px;width:157px;height:36px;background:#f3f3f3;border:1px solid #d6dce1;border-radius:3px;"></div>
<div class="a" style="left:1092px;top:801px;font-size:11.5px;line-height:11.5px;color:#7e8390;">2</div>
<div class="a" style="left:1244px;top:800px;font-size:11.99px;line-height:11.99px;color:#7e8390;">to</div>
<div class="a" style="left:1265px;top:787px;width:157px;height:36px;background:#fff;border:1px solid #d6dce1;border-radius:3px;"></div>
<div class="a" style="left:1280px;top:801px;font-size:11.5px;line-height:11.5px;color:#7e8390;">3</div>
<svg class="a" style="left:1432.0px;top:798.0px;" width="15" height="15" viewBox="0 0 15 15"><path d="M1 1 L14 14 M14 1 L1 14" stroke="#111" stroke-width="1.25"/></svg>
<div class="a" style="left:853px;top:838px;width:157px;height:36px;background:#fff;border:1px solid #d6dce1;border-radius:3px;border-left:3px solid #f26b6b;"></div>
<div class="a" style="left:869px;top:852px;font-size:10.79px;line-height:10.79px;color:#7e8390;">10.00</div>
<div class="a" style="left:1020px;top:851px;font-size:11.74px;line-height:11.74px;color:#7e8390;">for range</div>
<div class="a" style="left:1077px;top:838px;width:157px;height:36px;background:#f3f3f3;border:1px solid #d6dce1;border-radius:3px;"></div>
<div class="a" style="left:1092px;top:852px;font-size:11.5px;line-height:11.5px;color:#7e8390;">3</div>
<div class="a" style="left:1244px;top:851px;font-size:11.99px;line-height:11.99px;color:#7e8390;">to</div>
<div class="a" style="left:1265px;top:838px;width:157px;height:36px;background:#fff;border:1px solid #d6dce1;border-radius:3px;"></div>
<div class="a" style="left:1280px;top:852px;font-size:11.5px;line-height:11.5px;color:#7e8390;">4</div>
<svg class="a" style="left:1432.0px;top:849.0px;" width="15" height="15" viewBox="0 0 15 15"><path d="M1 1 L14 14 M14 1 L1 14" stroke="#111" stroke-width="1.25"/></svg>
<div class="a" style="left:853px;top:889px;width:157px;height:36px;background:#fff;border:1px solid #d6dce1;border-radius:3px;border-left:3px solid #f26b6b;"></div>
<div class="a" style="left:869px;top:903px;font-size:10.79px;line-height:10.79px;color:#7e8390;">10.00</div>
<div class="a" style="left:1020px;top:902px;font-size:11.74px;line-height:11.74px;color:#7e8390;">for range</div>
<div class="a" style="left:1077px;top:889px;width:157px;height:36px;background:#f3f3f3;border:1px solid #d6dce1;border-radius:3px;"></div>
<div class="a" style="left:1092px;top:903px;font-size:11.5px;line-height:11.5px;color:#7e8390;">4</div>
<div class="a" style="left:1244px;top:902px;font-size:11.99px;line-height:11.99px;color:#7e8390;">to</div>
<div class="a" style="left:1265px;top:889px;width:157px;height:36px;background:#fff;border:1px solid #d6dce1;border-radius:3px;"></div>
<div class="a" style="left:1280px;top:903px;font-size:11.5px;line-height:11.5px;color:#7e8390;">5</div>
<svg class="a" style="left:1432.0px;top:900.0px;" width="15" height="15" viewBox="0 0 15 15"><path d="M1 1 L14 14 M14 1 L1 14" stroke="#111" stroke-width="1.25"/></svg>
<div class="a" style="left:853px;top:937px;font-size:12.57px;line-height:12.57px;color:#3a8ee6;text-decoration:underline;">Add New</div>
<div class="a" style="left:1386px;top:937px;font-size:12.41px;line-height:12.41px;color:#3a8ee6;text-decoration:underline;">Select Unit</div>
<div class="a" style="left:853px;top:979px;font-size:11.0px;line-height:11.0px;color:#7b8090;">Excess Per-Unit Price</div>
<div class="a" style="left:1174px;top:979px;font-size:11.81px;line-height:11.81px;color:#7b8090;">Quantity</div>
<div class="a" style="left:853px;top:1000px;width:273px;height:36px;background:#fff;border:1px solid #d6dce1;border-radius:3px;border-left:3px solid #f26b6b;"></div>
<div class="a" style="left:868px;top:1012px;font-size:13.18px;line-height:13.18px;color:#1b1b1b;">10.00</div>
<div class="a" style="left:1141px;top:1013px;font-size:11.76px;line-height:11.76px;color:#7e8390;">per</div>
<div class="a" style="left:1173px;top:1000px;width:273px;height:36px;background:#fff;border:1px solid #d6dce1;border-radius:3px;"></div>
<div class="a" style="left:1188px;top:1012px;font-size:13.5px;line-height:13.5px;color:#1b1b1b;">5</div>
<div class="a" style="left:812px;top:1076px;width:669px;height:2px;background:#dde1e5;"></div>
<div class="a" style="left:853px;top:1116px;font-size:20px;line-height:20px;color:#7f7f7f;letter-spacing:-1.294px;">BILLING PREFERENCES</div>
<div class="a" style="left:853px;top:1153px;width:49px;height:3px;background:#3a8ee6;border-radius:2px;"></div>
<div class="a" style="left:854px;top:1193px;width:16px;height:16px;background:#fff;border:1px solid #c6cbd9;border-radius:3px;"></div>
<div class="a" style="left:881px;top:1194px;font-size:13.21px;line-height:13.21px;color:#1b1b1b;">View All</div>
<div class="a" style="left:1304px;top:1194px;font-size:13.42px;line-height:13.42px;color:#1b1b1b;">System Default</div>
<div class="a" style="left:853px;top:1222px;width:593px;height:1px;background:#d5dde2;"></div>
<div class="a" style="left:854px;top:1252px;font-size:13.59px;line-height:13.59px;color:#1b1b1b;">Billing Mode</div>
<div class="a" style="left:1032px;top:1243px;width:100px;height:30px;background:#e8eaee;border:1px solid #d9dde2;border-radius:3px;"></div>
<div class="a" style="left:1047px;top:1252px;font-size:13.8px;line-height:13.8px;color:#a7abb1;">None</div>
<svg class="a" style="left:1110px;top:1257px;" width="7" height="4" viewBox="0 0 7 4"><path d="M0 0 L7 0 L3.5 4Z" fill="#a8adb4"/></svg>
<div class="a" style="left:1157px;top:1250px;width:16px;height:16px;background:#3a8ee6;border-radius:3px;"></div>
<svg class="a" style="left:1157px;top:1250px;" width="16" height="16" viewBox="0 0 16 16"><path d="M3.4 8.5 L6.3 11 L11.6 5.3" stroke="#fff" stroke-width="1.1" fill="none"/></svg>
<div class="a" style="left:1180px;top:1254px;font-size:11.2px;line-height:11.2px;color:#9a9fab;">Use System Default</div>
<div class="a" style="left:1304px;top:1252px;font-size:13.42px;line-height:13.42px;color:#1b1b1b;">Arrears</div>
<div class="a" style="left:853px;top:1293px;width:593px;height:1px;background:#d5dde2;"></div>
<div class="a" style="left:854px;top:1323px;font-size:13.18px;line-height:13.18px;color:#1b1b1b;">Charge Period</div>
<div class="a" style="left:1032px;top:1314px;width:100px;height:30px;background:#fff;border:1px solid #d9dde2;border-radius:3px;"></div>
<div class="a" style="left:1047px;top:1323px;font-size:13.85px;line-height:13.85px;color:#1b1b1b;">2 Months</div>
<svg class="a" style="left:1110px;top:1327px;" width="8" height="6" viewBox="0 0 8 6"><path d="M0 0 L8 0 L4.0 6Z" fill="#111"/></svg>
<div class="a" style="left:1157px;top:1321px;width:16px;height:16px;background:#fff;border:1px solid #c6cbd9;border-radius:3px;"></div>
<div class="a" style="left:1180px;top:1325px;font-size:11.2px;line-height:11.2px;color:#9a9fab;">Use System Default</div>
<div class="a" style="left:1304px;top:1322px;font-size:14.11px;line-height:14.11px;color:#1b1b1b;">1 Month</div>
<div class="a" style="left:853px;top:1364px;width:593px;height:1px;background:#d5dde2;"></div>
<div class="a" style="left:854px;top:1394px;font-size:13.4px;line-height:13.4px;color:#1b1b1b;">Charge Start Date</div>
<div class="a" style="left:1032px;top:1385px;width:100px;height:30px;background:#e8eaee;border:1px solid #d9dde2;border-radius:3px;"></div>
<div class="a" style="left:1047px;top:1394px;font-size:13.8px;line-height:13.8px;color:#a7abb1;">None</div>
<svg class="a" style="left:1110px;top:1399px;" width="7" height="4" viewBox="0 0 7 4"><path d="M0 0 L7 0 L3.5 4Z" fill="#a8adb4"/></svg>
<div class="a" style="left:1157px;top:1392px;width:16px;height:16px;background:#3a8ee6;border-radius:3px;"></div>
<svg class="a" style="left:1157px;top:1392px;" width="16" height="16" viewBox="0 0 16 16"><path d="M3.4 8.5 L6.3 11 L11.6 5.3" stroke="#fff" stroke-width="1.1" fill="none"/></svg>
<div class="a" style="left:1180px;top:1396px;font-size:11.2px;line-height:11.2px;color:#9a9fab;">Use System Default</div>
<div class="a" style="left:1304px;top:1394px;font-size:13.75px;line-height:13.75px;color:#1b1b1b;">Order Start</div>
<div class="a" style="left:853px;top:1435px;width:593px;height:1px;background:#d5dde2;"></div>
<div class="a" style="left:854px;top:1465px;font-size:13.39px;line-height:13.39px;color:#1b1b1b;">Enable Tax</div>
<div class="a" style="left:1032px;top:1456px;width:100px;height:30px;background:#e8eaee;border:1px solid #d9dde2;border-radius:3px;"></div>
<div class="a" style="left:1047px;top:1465px;font-size:13.8px;line-height:13.8px;color:#a7abb1;">None</div>
<svg class="a" style="left:1110px;top:1470px;" width="7" height="4" viewBox="0 0 7 4"><path d="M0 0 L7 0 L3.5 4Z" fill="#a8adb4"/></svg>
<div class="a" style="left:1157px;top:1463px;width:16px;height:16px;background:#3a8ee6;border-radius:3px;"></div>
<svg class="a" style="left:1157px;top:1463px;" width="16" height="16" viewBox="0 0 16 16"><path d="M3.4 8.5 L6.3 11 L11.6 5.3" stroke="#fff" stroke-width="1.1" fill="none"/></svg>
<div class="a" style="left:1180px;top:1467px;font-size:11.2px;line-height:11.2px;color:#9a9fab;">Use System Default</div>
<div class="a" style="left:1304px;top:1466px;font-size:11.65px;line-height:11.65px;color:#1b1b1b;">Yes</div>
<div class="a" style="left:1437px;top:1232px;width:8px;height:277px;background:#e4e7eb;border-radius:4px;"></div>
<div class="a" style="left:1437px;top:1282px;width:8px;height:153px;background:#c3c7ce;border-radius:4px;"></div>
<div class="a" style="left:1256px;top:1542px;width:99px;height:45px;background:#a8adb8;border-radius:3px;"></div>
<div class="a" style="left:1285px;top:1560px;font-size:12.81px;line-height:12.81px;color:#fff;font-weight:bold;-webkit-text-stroke:0.3px #fff;">Cancel</div>
<div class="a" style="left:1365px;top:1542px;width:100px;height:45px;background:#3d8fe3;border-radius:3px;"></div>
<div class="a" style="left:1398px;top:1560px;font-size:12.84px;line-height:12.84px;color:#fff;font-weight:bold;-webkit-text-stroke:0.3px #fff;">Save</div>
</div>
</body></html>
